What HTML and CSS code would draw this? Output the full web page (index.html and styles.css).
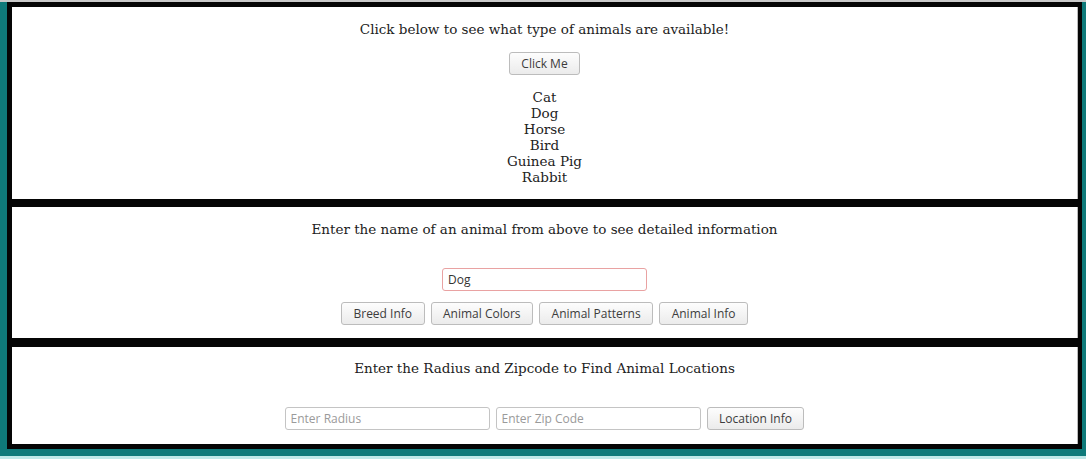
FILE: index.html
```html
<!DOCTYPE html>
<html>
<head>
<meta charset="utf-8">
<link rel="stylesheet" href="styles.css">
</head>
<body>
<div class="topline"></div>
<div class="frame">
  <section class="panel panel-list">
    <p class="heading">Click below to see what type of animals are available!</p>
    <button class="btn">Click Me</button>
    <div class="animals">
      <div>Cat</div>
      <div>Dog</div>
      <div>Horse</div>
      <div>Bird</div>
      <div>Guinea Pig</div>
      <div>Rabbit</div>
    </div>
  </section>
  <section class="panel panel-info">
    <p class="heading">Enter the name of an animal from above to see detailed information</p>
    <input class="field field-invalid" type="text" value="Dog">
    <div class="row">
      <button class="btn">Breed Info</button>
      <button class="btn">Animal Colors</button>
      <button class="btn">Animal Patterns</button>
      <button class="btn">Animal Info</button>
    </div>
  </section>
  <section class="panel panel-loc">
    <p class="heading">Enter the Radius and Zipcode to Find Animal Locations</p>
    <div class="row">
      <input class="field" type="text" placeholder="Enter Radius">
      <input class="field" type="text" placeholder="Enter Zip Code">
      <button class="btn">Location Info</button>
    </div>
  </section>
</div>
<div class="bottomline"></div>
<div class="taskstrip"></div>
</body>
</html>
```

FILE: styles.css
```css
html, body {
  margin: 0;
  padding: 0;
}
body {
  width: 1086px;
  height: 459px;
  overflow: hidden;
  background: #0f7a7a;
  font-family: "DejaVu Serif", serif;
  color: #222;
}
.topline {
  height: 2px;
  background: #c9c9c9;
}
.frame {
  margin-left: 7px;
  width: 1066px;
  background: #050505;
  padding: 5px 4px 5px 5px;
  display: flex;
  flex-direction: column;
  gap: 8px;
}
.panel {
  background: #fff;
  display: flex;
  flex-direction: column;
  align-items: center;
  border-right: 1px solid #bbb;
}
.heading {
  margin: 0;
  font-size: 13.5px;
  line-height: 18px;
}
.panel-list {
  height: 192px;
  box-sizing: border-box;
  padding-top: 13px;
}
.panel-list .btn {
  margin-top: 14px;
}
.animals {
  margin-top: 14px;
  font-size: 13.5px;
  line-height: 16px;
  text-align: center;
}
.panel-info {
  height: 131px;
  box-sizing: border-box;
  padding-top: 13px;
}
.panel-info .field {
  margin-top: 30px;
}
.panel-info .row {
  margin-top: 11px;
}
.panel-loc {
  height: 97px;
  box-sizing: border-box;
  padding-top: 12px;
  margin-top: 1px;
}
.panel-loc .row {
  margin-top: 30px;
}
.row {
  display: flex;
  gap: 6px;
  align-items: center;
}
.btn {
  font-family: "Open Sans", sans-serif;
  font-size: 12px;
  color: #3c3c3c;
  height: 23px;
  padding: 0 11.5px;
  border: 1px solid #bcbcbc;
  border-radius: 3px;
  background: linear-gradient(#fdfdfd, #ebebeb);
  line-height: 21px;
}
.field {
  font-family: "Open Sans", sans-serif;
  font-size: 12px;
  color: #333;
  width: 205px;
  height: 23px;
  box-sizing: border-box;
  padding: 0 5px;
  border: 1px solid #c4c4c4;
  border-radius: 3px;
  background: #fff;
}
.field::placeholder {
  color: #9a9a9a;
}
.field-invalid {
  border-color: #e9a2a2;
}
.bottomline {
  height: 7px;
  background: #0f7a7a;
}
.taskstrip {
  height: 3px;
  background: #bfe8e8;
}
```
